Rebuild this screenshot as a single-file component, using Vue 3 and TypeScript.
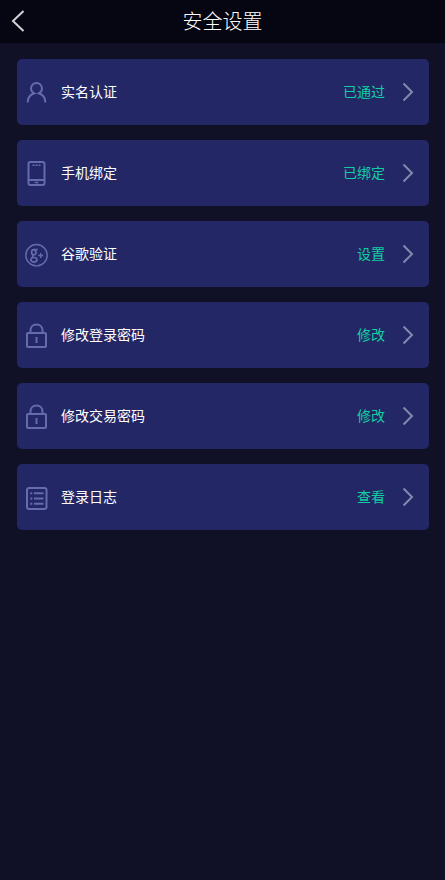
<script setup lang="ts">
type IconName = 'user' | 'phone' | 'google' | 'lock' | 'log'

interface SettingItem {
  id: string
  icon: IconName
  label: string
  status: string
}

const items: SettingItem[] = [
  { id: 'identity', icon: 'user', label: '实名认证', status: '已通过' },
  { id: 'phone', icon: 'phone', label: '手机绑定', status: '已绑定' },
  { id: 'google', icon: 'google', label: '谷歌验证', status: '设置' },
  { id: 'login-password', icon: 'lock', label: '修改登录密码', status: '修改' },
  { id: 'trade-password', icon: 'lock', label: '修改交易密码', status: '修改' },
  { id: 'login-log', icon: 'log', label: '登录日志', status: '查看' },
]
</script>

<template>
  <div class="page">
    <header class="header">
      <button class="back" type="button" aria-label="返回">
        <svg width="14" height="24" viewBox="0 0 14 24" fill="none" aria-hidden="true">
          <path d="M12.5 2 2 12 12.5 22" stroke="#d2d3d6" stroke-width="2" />
        </svg>
      </button>
      <h1 class="title">安全设置</h1>
    </header>

    <main>
      <ul class="list">
        <li v-for="item in items" :key="item.id">
          <a class="card" :href="'#' + item.id">
            <svg class="icon" width="24" height="28" viewBox="0 0 24 28" aria-hidden="true">
              <g v-if="item.icon === 'user'">
                <path d="M3.700 24.500C3.700 20 5.700 16.800 10.200 15.300C8 14.200 7 12.500 7 10.500a5.500 5.500 0 0 1 11 0c0 2-1 3.700-3.200 4.800C19.300 16.800 21.300 20 21.300 24.500" />
              </g>
              <g v-else-if="item.icon === 'phone'">
                <rect x="4.500" y="3" width="16" height="23" rx="2" />
                <path d="M4.500 21h16" />
                <path class="faint" d="M8.500 6.300h2M11.500 6.300h2M14.500 6.300h2M10.700 23.500h3.600" />
              </g>
              <g v-else-if="item.icon === 'google'">
                <circle class="thin" cx="12.500" cy="15.200" r="10.700" />
                <ellipse class="medium" cx="9.800" cy="12.200" rx="2.200" ry="2.600" />
                <path class="thin" d="M10 9.500h3.800M9.500 15c-1.800 1-1.200 1.900.6 2.600" />
                <ellipse class="medium" cx="9.900" cy="19.800" rx="3" ry="2.300" />
                <path class="thin" d="M14.200 15.500h5M16.700 13v5" />
              </g>
              <g v-else-if="item.icon === 'lock'">
                <rect x="3" y="12" width="19" height="14" rx="1" />
                <path d="M6.500 11.500V9.500c0-3.500 2.500-6 6-6s6 2.500 6 6v2M12.500 16v6" />
              </g>
              <g v-else>
                <rect x="3" y="5" width="19.500" height="21" rx="2" />
                <path d="M10 10.300h9.500M10 15.500h9.500M10 20.700h9.500M6.300 10.300h2M6.300 15.500h2M6.300 20.700h2" />
              </g>
            </svg>
            <span class="label">{{ item.label }}</span>
            <span class="status">{{ item.status }}</span>
            <svg class="arrow" width="12" height="20" viewBox="0 0 12 20" fill="none" aria-hidden="true">
              <path d="M1.500 1.500 10 10 1.500 18.500" />
            </svg>
          </a>
        </li>
      </ul>
    </main>
  </div>
</template>

<style>
body {
  margin: 0;
  background: #101026;
}
</style>

<style scoped>
.page {
  min-height: 100vh;
  background: #101026;
  font-family: "Noto Sans CJK SC", sans-serif;
}

.header {
  display: grid;
  grid-template-columns: 44px 1fr 44px;
  align-items: start;
  height: 43px;
  background: #060612;
}

.back {
  display: flex;
  align-items: center;
  height: 41px;
  padding: 0 0 0 11px;
  border: 0;
  background: none;
  cursor: pointer;
}

.title {
  margin: 0;
  color: #fff;
  font-size: 20px;
  font-weight: 300;
  line-height: 42px;
  text-align: center;
}

.list {
  display: flex;
  flex-direction: column;
  gap: 15px;
  margin: 0;
  padding: 16px 16px 16px 17px;
  list-style: none;
}

.card {
  display: flex;
  align-items: center;
  height: 66px;
  padding: 0 15px 0 7px;
  border-radius: 5px;
  background: #232766;
  font-size: 14px;
  line-height: 20px;
  text-decoration: none;
}

.icon {
  flex: none;
  fill: none;
  stroke: #666bad;
  stroke-width: 2;
}

.icon .thin {
  stroke-width: 1.4;
}

.icon .medium {
  stroke-width: 1.7;
}

.icon .faint {
  stroke-width: 1.5;
}

.label,
.status {
  padding-bottom: 2px;
}

.label {
  flex: 1;
  margin-left: 13px;
  color: #fff;
}

.status {
  color: #12cfa2;
}

.arrow {
  flex: none;
  margin-left: 17px;
  stroke: #8587ac;
  stroke-width: 2;
}
</style>
